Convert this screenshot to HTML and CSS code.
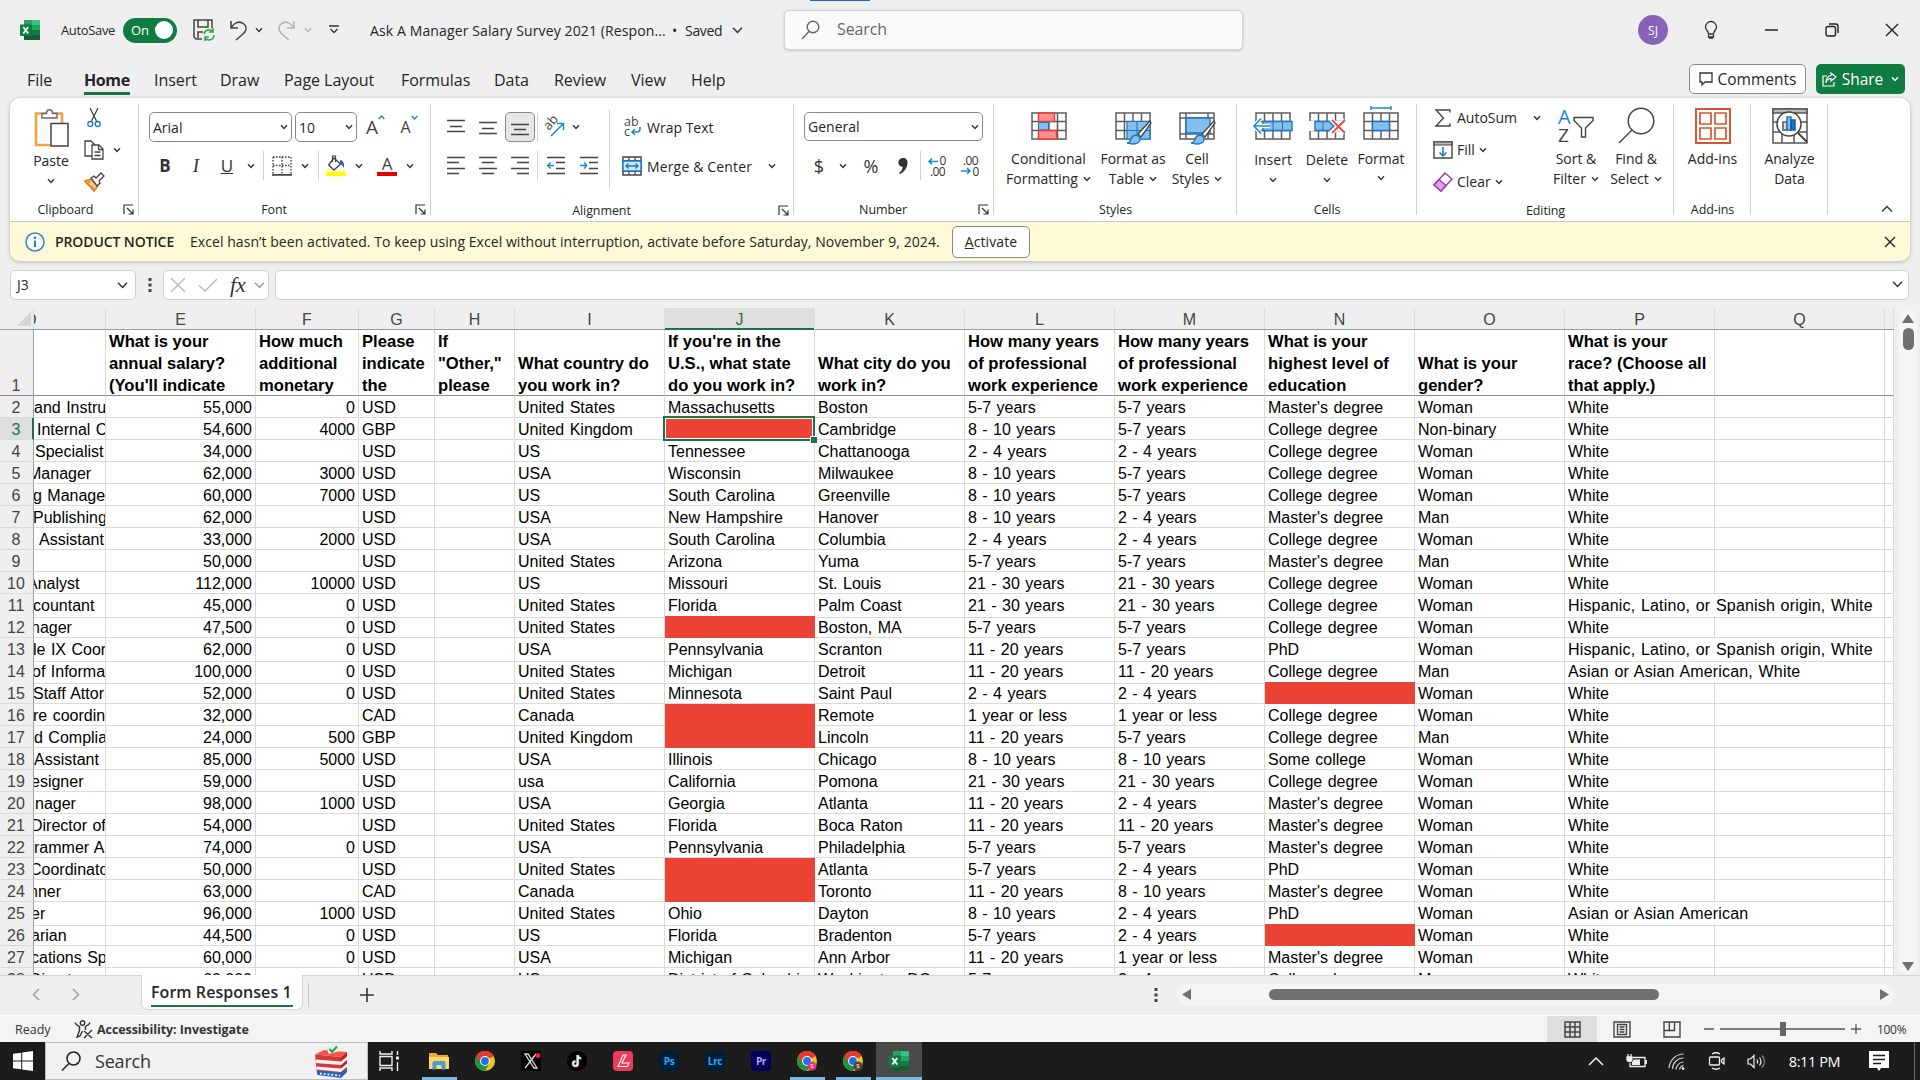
FILE: index.html
```html
<!DOCTYPE html>
<html lang="en">
<head>
<meta charset="utf-8">
<title>Ask A Manager Salary Survey 2021 - Excel</title>
<link rel="stylesheet" href="styles.css">
</head>
<body>
<svg class="defs" width="0" height="0">
  <defs>
    <symbol id="chev" viewBox="0 0 8 6"><path d="M1 1.2 4 4.4 7 1.2" fill="none" stroke="currentColor" stroke-width="1.4" vector-effect="non-scaling-stroke"/></symbol>
    <symbol id="launch" viewBox="0 0 11 11"><path d="M1 10V1h9M4 4l6 6M10 5.5V10H5.5" fill="none" stroke="#333" stroke-width="1.2"/></symbol>
    <symbol id="xl" viewBox="0 0 20 20"><path d="M6 0h13a1 1 0 0 1 1 1v18a1 1 0 0 1-1 1H5a1 1 0 0 1-1-1V1a1 1 0 0 1 1-1z" fill="#21a366"/><path d="M12 0h7a1 1 0 0 1 1 1v4h-8z" fill="#33c481"/><path d="M4 5h8v5H4z" fill="#107c41"/><path d="M4 10h8v5H4zM12 15h8v4a1 1 0 0 1-1 1H5a1 1 0 0 1-1-1v-4z" fill="#185c37"/><path d="M12 10h8v5h-8z" fill="#107c41"/><rect y="4.500" width="11.500" height="11.500" rx="1" fill="#107c41"/><path d="M3.300 7 8.200 13.500M8.200 7 3.300 13.500" stroke="#fff" stroke-width="1.800"/></symbol>
    <symbol id="chrome" viewBox="0 0 20 20"><circle cx="10" cy="10" r="10" fill="#fbc116"/><path d="M10 10 1.340 5A10 10 0 0 1 18.660 5z" fill="#e33b2e"/><path d="M1.340 5A10 10 0 0 0 10 20l4.300-7.500L10 10z" fill="#229342"/><path d="M10 5h8.660A10 10 0 0 0 1.340 5l4.300 7.500z" fill="#e33b2e"/><circle cx="10" cy="10" r="4.900" fill="#fff"/><circle cx="10" cy="10" r="3.900" fill="#1a73e8"/></symbol>
    <symbol id="grid" viewBox="0 0 36 28"><path d="M1 1h34v26H1zM1 9.500h34M1 18.500h34M9.500 1v26M18 1v26M26.500 1v26" fill="#fff" stroke="#5c5c5c" stroke-width="1.500"/></symbol>
    <symbol id="brush" viewBox="0 0 26 26"><path d="M25 2 13 15l3 3L26 4z" fill="#fff" stroke="#444" stroke-width="1.300"/><path d="M2 24c4 0 3-3 5-6s7-2 8 1-2 6-6 6-5-1-7-1z" fill="#83beec" stroke="#1976c2" stroke-width="1.400"/></symbol>
  </defs>
</svg>

<header class="titlebar">
  <svg class="i20" ><use href="#xl"/></svg>
  <span class="t-auto">AutoSave</span>
  <span class="toggle"><b>On</b><i></i></span>
  <svg width="22" height="22" viewBox="0 0 22 22" fill="none" stroke="#444" stroke-width="1.500"><path d="M9 20H3L1 18V1h18v8M5 1v7h10V1M5 19v-6h5"/><path d="M11 15a5 5 0 0 1 9-2M20 9v4h-4M21 16a5 5 0 0 1-9 3M12 22v-4h4" stroke="#2fa04e"/></svg>
  <svg width="20" height="21" viewBox="0 0 20 21" fill="none" stroke="#444" stroke-width="1.600"><path d="M2 1v7h7M2 8c3-5 8-8 13-4 4 4 2 7-1 10l-7 6"/></svg>
  <svg class="chev"><use href="#chev"/></svg>
  <svg width="20" height="21" viewBox="0 0 20 21" fill="none" stroke="#b5b5b5" stroke-width="1.600"><path d="M18 1v7h-7M18 8C15 3 10 0 5 4 1 8 3 11 6 14l7 6"/></svg>
  <svg class="chev pale"><use href="#chev"/></svg>
  <svg width="10" height="10" viewBox="0 0 10 10" fill="none" stroke="#333" stroke-width="1.300"><path d="M0 1h10M1.500 4 5 7.500 8.500 4"/></svg>
  <span class="t-doc t-name">Ask A Manager Salary Survey 2021 (Respon...</span>
  <span class="t-doc">•</span>
  <span class="t-doc">Saved</span>
  <svg class="chev12"><use href="#chev"/></svg>
  <div class="searchbox">
    <svg width="20" height="20" viewBox="0 0 20 20" fill="none" stroke="#666" stroke-width="1.400"><circle cx="12" cy="7" r="5.800"/><path d="M8 11.500 1 19"/></svg>
    <span>Search</span>
    <i class="busy"></i>
  </div>
  <span class="avatar">SJ</span>
  <svg width="14" height="18" viewBox="0 0 14 18" fill="none" stroke="#333" stroke-width="1.300"><path d="M4.500 13c0-3-3-4-3-7a5.500 5.500 0 0 1 11 0c0 3-3 4-3 7zM5 17h4M4.500 14v2h5v-2"/></svg>
  <svg width="13" height="12" viewBox="0 0 13 12" stroke="#222" stroke-width="1.500"><path d="M0 6h13"/></svg>
  <svg width="14" height="14" viewBox="0 0 14 14" fill="none" stroke="#222" stroke-width="1.400"><rect x="1" y="3.500" width="9.500" height="9.500" rx="2"/><path d="M4 1h6.500Q13 1 13 3.500V10"/></svg>
  <svg width="14" height="14" viewBox="0 0 14 14" stroke="#222" stroke-width="1.400"><path d="M1 1l12 12M13 1 1 13"/></svg>
</header>

<nav class="tabs">
  <span>File</span><span class="on">Home</span><span>Insert</span><span>Draw</span><span>Page Layout</span><span>Formulas</span><span>Data</span><span>Review</span><span>View</span><span>Help</span>
  <button class="btn-comments"><svg width="14" height="14" viewBox="0 0 14 14" fill="none" stroke="#333" stroke-width="1.300"><path d="M1 1h12v9H6l-3 3v-3H1z"/></svg>Comments</button>
  <button class="btn-share"><svg width="15" height="15" viewBox="0 0 15 15" fill="none" stroke="#fff" stroke-width="1.200"><path d="M5 4H1v10h11v-4M9 1l5 4-5 4V6.500C6 6.500 4.500 8 4 11c0-5 2-7 5-7.500z"/></svg>Share<svg class="chev"><use href="#chev"/></svg></button>
</nav>

<section class="shell">
<div class="ribbon">
  <div class="group g-clip">
    <div class="body">
      <div class="big paste">
        <svg width="35" height="38" viewBox="0 0 35 38"><path d="M2 4.500h26V36H2z" fill="#fff" stroke="#f0a33f" stroke-width="2.600"/><path d="M6 8h18v24H6z" fill="#fafafa"/><path d="M8 9V4.500h4.500c0-5 6-5 6 0H23V9z" fill="#fff" stroke="#666" stroke-width="1.400"/><path d="M17 14.500h17V37H17z" fill="#fff" stroke="#444" stroke-width="1.500"/></svg>
        <span>Paste</span><svg class="chev"><use href="#chev"/></svg>
      </div>
      <div class="clipcol">
        <svg width="14" height="20" viewBox="0 0 14 20" fill="none" stroke="#444" stroke-width="1.300"><path d="M3 0l6.500 13M11 0 4.500 13"/><circle cx="3.300" cy="16" r="2.500" stroke="#1976c2"/><circle cx="10.700" cy="16" r="2.500" stroke="#1976c2"/></svg>
        <div class="copyrow"><svg width="20" height="20" viewBox="0 0 20 20" fill="#fff" stroke="#444" stroke-width="1.300"><path d="M8 16H1V1h6l3 3v12z"/><path d="M8 5h7l4 4v10H8z"/><path d="M14.500 5v4.500H19M10.500 12h6M10.500 15.500h6" fill="none"/></svg><svg class="chev"><use href="#chev"/></svg></div>
        <svg width="21" height="20" viewBox="0 0 21 20"><path d="M1 9l6-2 7 7-4 5z" fill="#fbc586" stroke="#e07b1a" stroke-width="1.500"/><path d="M3 12l7 5M6 9l-3 3" stroke="#e07b1a" stroke-width="1.300"/><path d="M7 6l3-2 2 2 5-5 3 3-5 5 1 2-3 3z" fill="#fff" stroke="#444" stroke-width="1.300"/></svg>
      </div>
    </div>
    <footer><span>Clipboard</span><svg class="launch"><use href="#launch"/></svg></footer>
  </div>

  <div class="group g-font">
    <div class="rows">
      <div class="r r1">
        <div class="combo"><span>Arial</span><svg class="chev"><use href="#chev"/></svg></div>
        <div class="combo"><span>10</span><svg class="chev"><use href="#chev"/></svg></div>
        <span class="afont">A<svg width="7" height="5" viewBox="0 0 7 5"><path d="M.7 4 3.500 1 6.300 4" fill="none" stroke="#1e88d8" stroke-width="1.500"/></svg></span>
        <span class="afont small">A<svg width="7" height="5" viewBox="0 0 7 5"><path d="M.7 1 3.500 4 6.300 1" fill="none" stroke="#1e88d8" stroke-width="1.500"/></svg></span>
      </div>
      <div class="r r2">
        <b class="ltr">B</b><i class="ltr it">I</i><u class="ltr">U</u><svg class="chev"><use href="#chev"/></svg><hr>
        <svg width="20" height="20" viewBox="0 0 20 20" fill="none" stroke="#444" stroke-width="1.400"><path d="M1 1h18M1 1v17M19 1v17M10 1v17M1 9.500h18" stroke-dasharray="1.600 1.400"/><path d="M0 18.800h20" stroke-width="1.800"/></svg>
        <svg class="chev"><use href="#chev"/></svg><hr>
        <svg width="20" height="20" viewBox="0 0 20 20"><path d="M8 2 2.500 9l5.500 5 6.500-6z" fill="#fff" stroke="#444" stroke-width="1.300"/><path d="M6.500 6V0h3v6" fill="none" stroke="#444" stroke-width="1.200"/><path d="M14 4c3 0 4.500 3 4 8-1-2-2-3-4-4z" fill="#1e66b0"/><path d="M0 15.500h20V20H0z" fill="#ff0"/></svg>
        <svg class="chev"><use href="#chev"/></svg>
        <span class="fontcolor">A</span>
        <svg class="chev"><use href="#chev"/></svg>
      </div>
    </div>
    <footer><span>Font</span><svg class="launch"><use href="#launch"/></svg></footer>
  </div>

  <div class="group g-align">
    <div class="alignbody">
      <div class="rows">
        <div class="r r1">
          <svg class="al"><path d="M0 2.500h18M3 8.500h12M0 13.500h18"/></svg>
          <svg class="al"><path d="M0 4.500h18M3 10.500h12M0 15.500h18"/></svg>
          <span class="sel"><svg class="al"><path d="M0 6.500h18M3 11.500h12M0 16.500h18"/></svg></span><hr>
          <svg width="21" height="20" viewBox="0 0 21 20"><text x="0" y="0" transform="translate(5 14) rotate(-50)" font-size="13" fill="#444" font-family="Open Sans, sans-serif">ab</text><path d="M7 19 19 7M13 6.500h6.500V13" fill="none" stroke="#1e88d8" stroke-width="1.500"/></svg>
          <svg class="chev"><use href="#chev"/></svg>
        </div>
        <div class="r r2">
          <svg class="al"><path d="M0 1.500h18M0 6.500h12M0 12.500h18M0 17.500h12"/></svg>
          <svg class="al"><path d="M0 1.500h18M3 6.500h12M0 12.500h18M3 17.500h12"/></svg>
          <svg class="al"><path d="M0 1.500h18M6 6.500h12M0 12.500h18M6 17.500h12"/></svg><hr>
          <svg class="al"><path d="M0 1.500h18M9 6.500h9M9 12.500h9M0 17.500h18"/><path d="M7 9.500H1M3.500 6.500.7 9.500l2.800 3" stroke="#1e88d8"/></svg>
          <svg class="al"><path d="M0 1.500h18M9 6.500h9M9 12.500h9M0 17.500h18"/><path d="M0 9.500h6.500M4 6.500l2.800 3-2.800 3" stroke="#1e88d8"/></svg>
        </div>
      </div>
      <div class="rows wraps">
        <div class="w"><svg width="20" height="20" viewBox="0 0 20 20"><text x="2" y="9" font-size="12.5" fill="#444" font-family="Open Sans, sans-serif">ab</text><text x="2" y="19" font-size="12.5" fill="#444" font-family="Open Sans, sans-serif">c</text><path d="M18 10v2q0 3-3 3H10M13 12l-3 3 3 3" fill="none" stroke="#1e88d8" stroke-width="1.500"/></svg><span>Wrap Text</span></div>
        <div class="w"><svg width="20" height="20" viewBox="0 0 20 20"><path d="M1 1h18v18H1z" fill="#fff" stroke="#444" stroke-width="1.500"/><path d="M1 5h18M1 15h18M7 1v4M13 1v4M7 15v4M13 15v4" stroke="#444" stroke-width="1.300"/><path d="M1 5h18v10H1z" fill="#cfe6f8" stroke="#1976c2" stroke-width="1.300"/><path d="M4 10h12M6.500 7.500 4 10l2.500 2.500M13.500 7.500 16 10l-2.500 2.500" fill="none" stroke="#1976c2" stroke-width="1.300"/></svg><span class="merge">Merge &amp; Center</span><svg class="chev"><use href="#chev"/></svg></div>
      </div>
    </div>
    <footer><span>Alignment</span><svg class="launch"><use href="#launch"/></svg></footer>
  </div>

  <div class="group g-num">
    <div class="rows">
      <div class="combo"><span>General</span><svg class="chev"><use href="#chev"/></svg></div>
      <div class="r r2">
        <span class="sym">$</span><svg class="chev"><use href="#chev"/></svg><span class="sym">%</span><svg width="10" height="16" viewBox="0 0 10 16"><path d="M5 0a4 4 0 0 1 4.500 4.500C9.500 10 6 14 2 16l-1-1c2-1.500 3.500-3.500 3.700-6A4.400 4.400 0 1 1 5 0z" fill="#333"/></svg><hr>
        <svg width="21" height="20" viewBox="0 0 21 20" class="dec"><text x="12.500" y="9">0</text><text x="3" y="19.500">.00</text><path d="M11 5.500H2M5 2.500l-3 3 3 3"/></svg>
        <svg width="21" height="20" viewBox="0 0 21 20" class="dec"><text x="3" y="9">.00</text><text x="12.500" y="19.500">0</text><path d="M1 15h9M7 12l3 3-3 3"/></svg>
      </div>
    </div>
    <footer><span>Number</span><svg class="launch"><use href="#launch"/></svg></footer>
  </div>

  <div class="group g-styles">
    <div class="body">
      <div class="big"><svg width="36" height="36" viewBox="0 0 36 36"><g transform="translate(0 4)"><use href="#grid" width="36" height="28"/><path d="M7.500 1h16v8.500h-16z" fill="#ff8f8f" stroke="#e23b3b" stroke-width="1.400"/><path d="M7.500 10.500h10v7.500h-10z" fill="#83beec" stroke="#1976c2"/><path d="M7.500 18.500h18V27h-18z" fill="#ff8f8f" stroke="#e23b3b" stroke-width="1.400"/></g></svg><span>Conditional</span><span>Formatting <svg class="chev"><use href="#chev"/></svg></span></div>
      <div class="big"><svg width="40" height="36" viewBox="0 0 40 36"><g transform="translate(2 4)"><use href="#grid" width="36" height="28"/><path d="M12 9.500h23V27H12z" fill="#83beec" stroke="#1976c2" stroke-width="1.200"/><path d="M12 18.500h23M22 9.500V27" stroke="#1976c2"/></g><use href="#brush" x="11" y="11" width="28" height="26"/></svg><span>Format as</span><span>Table <svg class="chev"><use href="#chev"/></svg></span></div>
      <div class="big"><svg width="40" height="36" viewBox="0 0 40 36"><path d="M3 5h34v26H3zM3 10h34M9 5v26M3 26h34M31 5v26" fill="#fff" stroke="#5c5c5c" stroke-width="1.500"/><path d="M9 10h24v15H9z" fill="#83beec" stroke="#1976c2" stroke-width="1.400"/><use href="#brush" x="11" y="11" width="28" height="26"/></svg><span>Cell</span><span>Styles <svg class="chev"><use href="#chev"/></svg></span></div>
    </div>
    <footer><span>Styles</span></footer>
  </div>

  <div class="group g-cells">
    <div class="body">
      <div class="big"><svg width="40" height="36" viewBox="0 0 40 36"><g transform="translate(2 4)"><use href="#grid" width="36" height="28"/></g><path d="M10 13.500h29v9H10z" fill="#83beec" stroke="#1976c2" stroke-width="1.400"/><path d="M20 13.500v9M29.500 13.500v9" stroke="#1976c2"/><path d="M17 18H1M8 10.500 1 18l7 7.500" fill="none" stroke="#fff" stroke-width="4"/><path d="M17 18H1M8 10.500 1 18l7 7.500" fill="none" stroke="#1e88d8" stroke-width="1.600"/></svg><span class="dn">Insert</span><svg class="chev"><use href="#chev"/></svg></div>
      <div class="big"><svg width="40" height="36" viewBox="0 0 40 36"><g transform="translate(2 4)"><use href="#grid" width="36" height="28"/></g><path d="M1 13h38v10H1z" fill="#fff"/><path d="M8 13.500h14l5 4.500-5 4.500H8z" fill="#83beec" stroke="#1976c2" stroke-width="1.400"/><path d="M16 13.500v9" stroke="#1976c2"/><path d="M25 12l13 13M38 12 25 25" stroke="#fff" stroke-width="4"/><path d="M25 12l13 13M38 12 25 25" stroke="#f04848" stroke-width="1.800"/></svg><span class="dn">Delete</span><svg class="chev"><use href="#chev"/></svg></div>
      <div class="big"><svg width="36" height="36" viewBox="0 0 36 36"><g transform="translate(0 4)"><use href="#grid" width="36" height="28"/></g><path d="M9.500 13.500h17v9h-17z" fill="#83beec" stroke="#1976c2" stroke-width="1.400"/><path d="M8 0h20M8-2v4M28-2v4" stroke="#1e88d8" stroke-width="1.500"/></svg><span>Format</span><svg class="chev up"><use href="#chev"/></svg></div>
    </div>
    <footer><span>Cells</span></footer>
  </div>

  <div class="group g-edit">
    <div class="body">
      <div class="editcol">
        <div><svg width="20" height="18" viewBox="0 0 20 18"><path d="M17 3.500V1H3l7.500 8L3 17h14v-2.500" fill="none" stroke="#444" stroke-width="1.400"/></svg><span>AutoSum</span><svg class="chev far"><use href="#chev"/></svg></div>
        <div><svg width="20" height="18" viewBox="0 0 20 18"><path d="M1 1h18v16H1z" fill="#fff" stroke="#444" stroke-width="1.400"/><path d="M1 1h18v3H1z" fill="#bbb" stroke="#444" stroke-width="1.200"/><path d="M10 6v9M6.500 11.500 10 15l3.500-3.500" fill="none" stroke="#1976c2" stroke-width="1.500"/></svg><span>Fill</span><svg class="chev"><use href="#chev"/></svg></div>
        <div><svg width="20" height="20" viewBox="0 0 20 20" stroke="#a238a8" stroke-width="1.400"><path d="M12 1l7 6L8 19l-7-6z" fill="#fff"/><path d="M6 7.500l7 6L8 19l-7-6z" fill="#dca3e4"/></svg><span>Clear</span><svg class="chev"><use href="#chev"/></svg></div>
      </div>
      <div class="big"><svg width="36" height="36" viewBox="0 0 36 36"><text x="0" y="16" font-size="20" fill="#1e88d8" font-family="Open Sans, sans-serif">A</text><text x="0" y="34" font-size="19" fill="#444" font-family="Open Sans, sans-serif">Z</text><path d="M16 9.500h19v3l-7.500 7.500v9h-4v-9L16 12.500z" fill="#fff" stroke="#444" stroke-width="1.400"/></svg><span>Sort &amp;</span><span>Filter <svg class="chev"><use href="#chev"/></svg></span></div>
      <div class="big"><svg width="38" height="36" viewBox="0 1 38 36" fill="none" stroke="#444" stroke-width="1.500"><circle cx="24" cy="14" r="12.800"/><path d="M15 23 2 36"/></svg><span>Find &amp;</span><span>Select <svg class="chev"><use href="#chev"/></svg></span></div>
    </div>
    <footer><span>Editing</span></footer>
  </div>

  <div class="group g-add">
    <div class="body">
      <div class="big"><svg width="36" height="36" viewBox="0 0 36 36" fill="#fff" stroke="#d8552f" stroke-width="2"><path d="M1 1h34v34H1z" /><path d="M5 5h11v11H5zM20 5h11v11H20zM5 20h11v11H5zM20 20h11v11H20z" stroke-width="1.700"/></svg><span>Add-ins</span></div>
    </div>
    <footer><span>Add-ins</span></footer>
  </div>

  <div class="group g-ana">
    <div class="body">
      <div class="big"><svg width="36" height="36" viewBox="0 0 36 36" fill="none" stroke="#555" stroke-width="1.500"><path d="M1 1h34v34H1z" fill="#fff"/><path d="M1 1h34v4H1z" fill="#bbb"/><path d="M1 14h34M1 24h34M10 24v11M22 24v11"/><circle cx="17" cy="16" r="12" fill="#fff" stroke="#444"/><path d="M26 25l9 9" stroke="#444" stroke-width="2"/><path d="M11 14h4v8h-4z" fill="#ddd"/><path d="M15 9h4v13h-4z" fill="#83beec" stroke="#1976c2"/><path d="M19 12h4v10h-4z" fill="#1976c2" stroke="#185a9c"/></svg><span>Analyze</span><span>Data</span></div>
    </div>
    <footer></footer>
  </div>
  <div class="collapse"><svg width="12" height="8" viewBox="0 0 12 8"><path d="M1 6.500 6 1.500l5 5" fill="none" stroke="#333" stroke-width="1.400"/></svg></div>
</div>
<div class="notice">
  <svg width="20" height="20" viewBox="0 0 20 20"><circle cx="10" cy="10" r="9" fill="#fff" stroke="#2f8bc9" stroke-width="1.600"/><circle cx="10" cy="5.800" r="1.200" fill="#1976c2"/><path d="M10 8.500V15" stroke="#1976c2" stroke-width="1.900"/></svg>
  <span class="n-title">PRODUCT NOTICE</span>
  <span class="n-text">Excel hasn’t been activated. To keep using Excel without interruption, activate before Saturday, November 9, 2024.</span>
  <button><u>A</u>ctivate</button>
  <svg class="n-x" width="12" height="12" viewBox="0 0 12 12" stroke="#222" stroke-width="1.400"><path d="M1 1l10 10M11 1 1 11"/></svg>
</div>
</section>

<div class="formula">
  <div class="namebox"><span>J3</span><svg class="chev12"><use href="#chev"/></svg></div>
  <svg width="4" height="14" viewBox="0 0 4 14" fill="#444"><path d="M.5 0h3v3h-3zM.5 5.500h3v3h-3zM.5 11h3v3h-3z"/></svg>
  <div class="fx"><svg width="16" height="16" viewBox="0 0 16 16" stroke="#b9b9b9" stroke-width="1.400"><path d="M1 1l14 14M15 1 1 15"/></svg><svg width="20" height="14" viewBox="0 0 20 14" fill="none" stroke="#b9b9b9" stroke-width="1.400"><path d="M1 7.500 7 13 19 1"/></svg><i>fx</i><svg class="chev12 gray"><use href="#chev"/></svg></div>
  <div class="finput"><svg class="chev12"><use href="#chev"/></svg></div>
</div>

<main class="sheetwrap">
  <div class="sheet" id="sheet"></div>
  <div class="vscroll"><svg width="12" height="10" viewBox="0 0 12 10"><path d="M6 0l6 9H0z" fill="#707070"/></svg><i></i><svg width="12" height="10" viewBox="0 0 12 10"><path d="M6 10 0 1h12z" fill="#707070"/></svg></div>
</main>

<div class="sheetbar">
  <svg width="8" height="13" viewBox="0 0 8 13"><path d="M7 1 1.500 6.500 7 12" fill="none" stroke="#a0a0a0" stroke-width="1.500"/></svg>
  <svg width="8" height="13" viewBox="0 0 8 13"><path d="M1 1l5.500 5.500L1 12" fill="none" stroke="#a0a0a0" stroke-width="1.500"/></svg>
  <div class="stab"><span>Form Responses 1</span></div>
  <i class="stsep"></i>
  <svg width="14" height="14" viewBox="0 0 14 14" stroke="#333" stroke-width="1.600"><path d="M7 0v14M0 7h14"/></svg>
  <svg width="4" height="14" viewBox="0 0 4 14" fill="#444"><path d="M.5 0h3v3h-3zM.5 5.500h3v3h-3zM.5 11h3v3h-3z"/></svg>
  <div class="hscroll"><svg width="9" height="11" viewBox="0 0 9 11"><path d="M0 5.500 9 0v11z" fill="#707070"/></svg><i></i><svg width="9" height="11" viewBox="0 0 9 11"><path d="M9 5.500 0 0v11z" fill="#707070"/></svg></div>
</div>

<div class="status">
  <span>Ready</span>
  <svg width="19" height="18" viewBox="0 0 19 18" fill="none" stroke="#333" stroke-width="1.400"><circle cx="8.500" cy="3" r="2.200"/><path d="M1 2.500c1 3 3 3.500 4.500 4v4L3 17l3-1 2.500-5M16 2.500c-1 3-3 3.500-4.500 4V10M10 11l8 7M18 10l-8 8"/></svg>
  <b>Accessibility: Investigate</b>
  <div class="view on"><svg width="17" height="17" viewBox="0 0 17 17"><path d="M1 1h15v15H1zM1 6h15M1 11h15M6 1v15M11 1v15" fill="none" stroke="#444" stroke-width="1.500"/></svg></div>
  <div class="view"><svg width="18" height="17" viewBox="0 0 18 17"><path d="M1 1h16v15H1zM4.500 3.500h9v10h-9zM6.500 6h5M6.500 8.500h5M6.500 11h5" fill="none" stroke="#444" stroke-width="1.400"/></svg></div>
  <div class="view"><svg width="18" height="17" viewBox="0 0 18 17"><path d="M1 1h16v15H1zM1 9.500h10.500V1M6.300 1v8.500" fill="none" stroke="#444" stroke-width="1.400"/></svg></div>
  <div class="zoomer"><svg width="157" height="16" viewBox="0 0 157 16" stroke="#555" stroke-width="1.300"><path d="M0 8h10M16 8h125M147 8h10M152 3v10"/><path d="M76 1h6v14h-6z" fill="#666" stroke="none"/></svg></div>
  <span class="pct">100%</span>
</div>

<footer class="taskbar">
  <div class="start"><svg width="20" height="20" viewBox="0 0 20 20" fill="#fff"><path d="M0 2.800 8.200 1.700v7.800H0zM9.200 1.500 20 0v9.500H9.200zM0 10.500h8.200v7.800L0 17.200zM9.200 10.500H20V20L9.200 18.500z"/></svg></div>
  <div class="tsearch"><svg width="20" height="20" viewBox="0 0 20 20" fill="none" stroke="#222" stroke-width="1.500"><circle cx="12.500" cy="7.500" r="6.500"/><path d="M8 12.500 1 19.500"/></svg><span>Search</span>
    <svg width="34" height="34" viewBox="0 0 34 34"><path d="M1 10.500 27 13v20L3 30z" fill="#d93636"/><path d="M27 13l6-5v19l-6 6z" fill="#b32626"/><path d="M1 10.500 10 6l23 2-6 5z" fill="#f0574a"/><path d="M12 3l10-3 4 7-11 3z" fill="#e3edf0"/><path d="M15.500 5l2.500 3 5-5.500" fill="none" stroke="#2f9e44" stroke-width="2"/><path d="M2 15.500l25 2 6-5v3.500l-6 5-25-2zM2.500 22.500l24.500 2 6-5V23l-6 5-24.500-2.500z" fill="#f4f4f4"/><path d="M3 26.500l24 2.500 6-5v4l-6 6-23.500-3z" fill="#2368c4"/><path d="M6 29.500l20 2.200" stroke="#fff" stroke-width="1.800" stroke-dasharray="1.800 2"/></svg></div>
  <div class="app"><svg width="22" height="20" viewBox="0 0 22 20" fill="none" stroke="#eee" stroke-width="1.400"><path d="M1 0v3h12V0M1 20v-3h12v3M1 5.500h12v9H1zM18.500 0v4M18.500 11v9"/><path d="M17 5.500h3v3h-3z" fill="#eee" stroke="none"/></svg></div>
  <div class="app run"><svg width="20" height="18" viewBox="0 0 20 18"><path d="M0 1h7l2 2h10v14H0z" fill="#e8a92c"/><path d="M0 5h20v12H0z" fill="#ffd768"/><path d="M3.500 17.500V11q0-2 2-2h9q2 0 2 2v6.500h-4V13h-5v4.500z" fill="#4a9bd4"/></svg></div>
  <div class="app"><svg class="i20"><use href="#chrome"/></svg></div>
  <div class="app"><svg width="20" height="20" viewBox="0 0 20 20"><rect width="20" height="20" fill="#000"/><path d="M4 3h3l9 14h-3zM15 3 4 17" fill="none" stroke="#ddd" stroke-width="1.300"/><circle cx="17" cy="4.500" r="2.500" fill="#f0193c"/></svg></div>
  <div class="app"><svg width="20" height="20" viewBox="0 0 20 20"><circle cx="10" cy="10" r="10" fill="#000"/><path d="M10.200 4v8.500a2.200 2.200 0 1 1-2.200-2.200" fill="none" stroke="#25f4ee" stroke-width="2"/><path d="M11.200 4.500v8.500a2.400 2.400 0 1 1-2.400-2.400M11.200 4.500q.5 3 3.300 3.300" fill="none" stroke="#fe2c55" stroke-width="2"/><path d="M10.800 4.200v8.500a2.300 2.300 0 1 1-2.300-2.300M10.800 4.200q.5 3 3.200 3.200" fill="none" stroke="#fff" stroke-width="1.600"/></svg></div>
  <div class="app"><svg width="20" height="20" viewBox="0 0 20 20"><rect width="20" height="20" rx="4" fill="#ef3a5d"/><path d="M10 4h3L9 12h7l-1.500 3.500H5z" fill="none" stroke="#fff" stroke-width="1.100"/></svg></div>
  <div class="app"><span class="adobe ps">Ps</span></div>
  <div class="app"><span class="adobe ps">Lrc</span></div>
  <div class="app"><span class="adobe pr">Pr</span></div>
  <div class="app run"><svg width="20" height="20" viewBox="0 0 20 20"><use href="#chrome"/><circle cx="15" cy="15" r="4.600" fill="#e0357f"/><text class="badge" x="15" y="17.200">s</text></svg></div>
  <div class="app run"><svg width="20" height="20" viewBox="0 0 20 20"><use href="#chrome"/><circle cx="15" cy="15" r="4.600" fill="#5d4038"/><text class="badge" x="15" y="17.200">s</text></svg></div>
  <div class="app act"><svg class="i20"><use href="#xl"/></svg></div>
  <div class="tray">
    <svg width="16" height="10" viewBox="0 0 16 10"><path d="M1 9l7-7 7 7" fill="none" stroke="#eee" stroke-width="1.500"/></svg>
    <svg width="21" height="15" viewBox="0 0 21 15" fill="none" stroke="#eee" stroke-width="1.300"><path d="M7 3.500h12v9H4V9M20.300 6v4"/><path d="M8 5.500h6V11H6V8z" fill="#eee" stroke="none"/><path d="M1 3h5v2.500q0 2-2.500 2T1 5.500zM2 0v3M5 0v3" fill="#eee"/></svg>
    <svg width="17" height="17" viewBox="0 0 17 17" fill="none" stroke="#ccc" stroke-width="1.200"><path d="M1 15A15 15 0 0 1 15.500 1M4.500 16A11 11 0 0 1 15.500 5M8 16.500A8 8 0 0 1 15.500 9M11.500 16.500a5 5 0 0 1 4-4"/><circle cx="15" cy="15.500" r="1.300" fill="#fff" stroke="none"/></svg>
    <svg width="16" height="18" viewBox="0 0 16 18" fill="none" stroke="#eee" stroke-width="1.300"><path d="M1.500 5h8q1 0 1 1v6q0 1-1 1h-8q-1 0-1-1V6q0-1 1-1zM12.500 8l2.500-2v6l-2.500-2zM3 2q4-2.500 8 0M3 16q4 2.500 8 0"/></svg>
    <svg width="20" height="17" viewBox="0 0 20 17" fill="none" stroke="#eee" stroke-width="1.200"><path d="M1 6h2.500L7 2.500v12L3.500 11H1zM10 6.500q1.500 2 0 4M12.500 4.500q3 4 0 8"/><path d="M15 2.500q5 6 0 12" stroke="#888"/></svg>
    <span>8:11 PM</span>
    <svg width="20" height="20" viewBox="0 0 20 20"><path d="M0 0h20v17h-8l-2 3-2-3H0z" fill="#fff"/><path d="M4 4.500h12M4 8.500h12M4 12.500h8" stroke="#1c1c1c" stroke-width="1.300"/></svg>
    <i></i>
  </div>
</footer>
<script src="sheet.js"></script>
</body>
</html>
```
FILE: styles.css
```css
* { box-sizing: border-box; }
body {
  margin: 0; width: 1920px; height: 1080px; overflow: hidden;
  display: flex; flex-direction: column;
  background: #efefef; color: #262626;
  font-family: "Open Sans", "Noto Sans", sans-serif; font-size: 14px;
}
svg { display: block; flex: none; overflow: visible; }
.defs { position: absolute; }
.chev { width: 8px; height: 6px; color: #333; }
.chev12 { width: 13px; height: 9px; color: #333; }
.pale { color: #b5b5b5; }
.gray { color: #999; }
.i20 { width: 20px; height: 20px; }
button { font: inherit; color: inherit; margin: 0; padding: 0; }
hr { border: 0; width: 1px; height: 29px; margin: 0; background: #d0d0d0; }

/* title bar */
.titlebar {
  height: 60px; padding-left: 20px; flex: none;
  display: grid; align-items: center;
  grid-template-columns: 41px 62px 70px 36px 26px 21px 28px 25px 41px 302px 13px 46px 53px 854px 66px 61px 60px 60px 20px;
}
.t-auto { font-size: 13px; letter-spacing: -.35px; white-space: nowrap; }
.t-doc { font-size: 14px; letter-spacing: -.3px; white-space: nowrap; }
.t-name { letter-spacing: .12px; }
.toggle {
  width: 54px; height: 25px; border-radius: 13px; background: #107c41; color: #fff;
  display: flex; align-items: center; justify-content: space-between; padding: 0 4px 0 8px;
}
.toggle b { font-weight: 400; font-size: 13px; }
.toggle i { width: 18px; height: 18px; border-radius: 50%; background: #fff; }
.searchbox {
  position: relative; width: 459px; height: 40px; background: #fafafa; border: 1px solid #d3d3d3; border-radius: 5px;
  box-shadow: 0 1px 3px rgba(0,0,0,.18); display: flex; align-items: center; gap: 16px; padding-left: 16px;
  font-size: 16px; color: #666;
}
.searchbox span { padding-bottom: 3px; letter-spacing: -.1px; }
.busy { position: absolute; left: 25px; top: -11px; width: 60px; height: 1px; background: #1a68b0; }
.avatar {
  width: 30px; height: 30px; border-radius: 50%; background: #8764b8; color: #fff;
  font-size: 12px; display: grid; place-items: center;
}

/* tabs */
.tabs {
  height: 38px; flex: none; padding-left: 27px; font-size: 16px; letter-spacing: -.05px;
  display: grid; align-items: start;
  grid-template-columns: 57px 70px 66px 64px 117px 93px 60px 77px 60px 998px 127px 89px;
}
.tabs span { height: 35px; line-height: 41px; white-space: nowrap; justify-self: start; }
.tabs .on { font-weight: 700; letter-spacing: -.4px; border-bottom: 3px solid #1a7340; }
.btn-comments, .btn-share { height: 30px; margin-top: 4px; border-radius: 5px; display: flex; align-items: center; justify-content: center; gap: 5px; font-size: 15.5px; }
.btn-comments { width: 117px; background: #fff; border: 1px solid #8a8a8a; }
.btn-share { background: #107c41; border: 0; color: #fff; }
.btn-share .chev { color: #fff; margin-left: 3px; }

/* ribbon */
.shell { margin: 0 10px; flex: none; width: 1900px; border-radius: 10px; overflow: hidden; box-shadow: 0 1px 4px rgba(0,0,0,.25); }
.ribbon { height: 124px; background: #fff; display: flex; border-bottom: 1px solid #c8c8c8; }
.group { display: flex; flex-direction: column; background: linear-gradient(#d0d0d0, #d0d0d0) right 6px / 1px 111px no-repeat; }
.group footer {
  height: 24px; padding: 0 5px; font-size: 12.5px; letter-spacing: -.1px;
  display: grid; grid-template-columns: 11px 1fr 11px; align-items: center;
}
.group footer span { grid-column: 2; text-align: center; }
.launch { width: 11px; height: 11px; grid-column: 3; }
.body { height: 101px; display: flex; }
.rows { height: 101px; padding-top: 14px; display: flex; flex-direction: column; gap: 10px; }
.r { height: 29px; display: grid; align-items: center; justify-items: center; }
.big { display: flex; flex-direction: column; align-items: center; padding-top: 10px; white-space: nowrap; }
.big > svg:first-child { margin-bottom: 5px; }
.big > span { height: 20px; line-height: 18px; display: flex; align-items: center; gap: 5px; }
.big > .dn { height: 28px; line-height: 22px; align-items: flex-start; }
.big .chev.up { margin-top: 6px; }
.g-clip { width: 129px; }
.g-clip footer span { padding-right: 18px; }
.paste { padding: 11px 0 0 20px; margin-right: 18px; width: 62px; }
.paste > svg:first-child { margin-bottom: 4px; }
.paste > span { margin-bottom: 7px; }
.clipcol { padding-top: 10px; display: flex; flex-direction: column; align-items: flex-start; gap: 12px; margin-left: -6px; }
.clipcol > svg:first-child { margin-left: 3px; }
.copyrow { display: flex; align-items: center; gap: 9px; }

.combo {
  justify-self: stretch; height: 30px; border: 1px solid #8a8a8a; border-radius: 5px; background: #fff;
  display: flex; align-items: center; justify-content: space-between; padding: 0 3px;
}
.g-font { width: 292px; }
.g-font footer span { padding-right: 22px; }
.g-font .r1 { grid-template-columns: 143px 62px 31px 30px; padding-left: 10px; column-gap: 3px; }
.g-font .r2 { grid-template-columns: 32px 30px 32px 16px 8px 30px 16px 10px 26px 20px 36px 10px; padding-left: 10px; }
.afont { display: flex; font-size: 19px; color: #444; line-height: 24px; }
.afont.small { font-size: 16px; }
.ltr { font-size: 17px; color: #333; line-height: 24px; }
.it { font-family: "Liberation Serif", serif; font-size: 19px; }
.fontcolor { font-size: 17px; line-height: 17px; width: 20px; text-align: center; border-bottom: 4px solid #e00000; color: #444; margin-top: -1px; }
.g-align { width: 363px; }
.g-align footer span, .g-num footer span { padding-right: 22px; }
.alignbody { display: flex; height: 101px; }
.g-align .r { grid-template-columns: 32px 32px 32px 3px 33px 33px; padding-left: 9px; }
.g-align .r1 { grid-template-columns: 32px 32px 32px 3px 31px 12px; }
.g-align .rows:first-child { width: 179px; background: linear-gradient(#d0d0d0, #d0d0d0) right 12px / 1px 79px no-repeat; }
.al { width: 18px; height: 19px; fill: none; stroke: #444; stroke-width: 1.4; }
.sel { width: 30px; height: 30px; border: 1px solid #8a8a8a; border-radius: 5px; background: #e6e6e6; display: grid; place-items: center; }
.wraps { padding-left: 12px; }
.w { height: 29px; display: flex; align-items: center; gap: 5px; padding-top: 1px; }
.merge { letter-spacing: .15px; }
.w .chev { margin-left: 11px; }
.g-num { width: 200px; }
.g-num .combo { margin: 0 11px 0 10px; height: 29px; flex: none; }
.g-num .r { grid-template-columns: 34px 14px 42px 22px 12px 22px 44px; padding-left: 8px; }
.sym { font-size: 18px; color: #333; }
.dec text { font-size: 12px; fill: #333; letter-spacing: -.6px; }
.dec path { fill: none; stroke: #1e88d8; stroke-width: 1.5; }
.g-styles { width: 243px; }
.g-styles .big:nth-child(1) { width: 109px; }
.g-styles .big:nth-child(2) { width: 60px; }
.g-styles .big:nth-child(3) { width: 68px; }
.g-cells { width: 180px; }
.g-cells .body { padding-left: 9px; }
.g-cells .big { width: 54px; }
.g-edit { width: 257px; }
.editcol { width: 127px; padding: 9px 0 0 16px; }
.editcol div { height: 32px; display: flex; align-items: center; gap: 4px; padding-bottom: 11px; }
.editcol .far { margin-left: 12px; }
.g-edit .big { width: 56px; }
.g-edit .big:nth-child(2) { width: 64px; }
.g-add { width: 77px; }
.g-ana { width: 77px; }
.g-add .big, .g-ana .big { width: 77px; }
.collapse { flex: 1; padding: 107px 0 0 53px; }

/* notice */
.notice { height: 39px; background: #fef9d6; display: flex; align-items: center; padding: 0 14px 0 15px; }
.n-title { margin-left: 10px; width: 135px; font-weight: 600; letter-spacing: -.1px; white-space: nowrap; }
.n-text { width: 762px; white-space: nowrap; letter-spacing: .06px; }
.notice button { width: 78px; height: 32px; background: #fff; border: 1px solid #8a8a8a; border-radius: 5px; letter-spacing: .1px; }
.n-x { margin-left: auto; }

/* formula bar */
.formula { height: 47px; flex: none; padding: 9px 11px 0 10px; display: flex; align-items: flex-start; }
.formula > svg { margin: 8px 11px 0 12px; }
.namebox, .fx, .finput { height: 30px; background: #fff; border: 1px solid #cfcfcf; border-radius: 5px; display: flex; align-items: center; }
.namebox { width: 126px; justify-content: space-between; padding: 0 6px; }
.namebox span { padding-bottom: 1px; }
.fx { width: 106px; padding-left: 6px; gap: 12px; }
.fx i { font-family: "Liberation Serif", serif; font-size: 22px; color: #333; line-height: 24px; width: 17px; }
.fx .gray { margin-left: -6px; }
.finput { margin-left: 6px; flex: 1; justify-content: flex-end; padding: 0 4px 2px; }

/* sheet */
.sheetwrap { height: 668px; flex: none; display: flex; overflow: hidden; border-bottom: 1px solid #d4d4d4; }
.sheet { width: 1894px; font-family: "Liberation Sans", Arial, sans-serif; font-size: 16px; word-spacing: 1px; color: #000; background: #fff; }
.row, .cols { display: grid; grid-template-columns: 34px 72px 150px 103px 76px 80px 150px 150px 150px 150px 150px 150px 150px 150px 170px 9px; }
.row { height: 22px; line-height: 23px; }
.row > div { border-right: 1px solid #dadada; border-bottom: 1px solid #dadada; padding: 0 2px 0 3px; white-space: nowrap; overflow: hidden; }
.row > .rh { background: #efefef; color: #444; text-align: center; border-right-color: #9f9f9f; padding: 0 1px 0 0; }
.row > .num { text-align: right; padding-right: 3px; }
.row > .spill { overflow: visible; border-right-color: transparent; letter-spacing: .17px; }
.row > .red { background: #ea4335; border-color: #ea4335; }
.row > .d { padding: 0; overflow: hidden; }
.cols { height: 22px; background: #efefef; border-bottom: 1px solid #9a9a9a; color: #444; }
.cols div { height: 21px; text-align: center; line-height: 23px; border-right: 1px solid #dcdcdc; overflow: hidden; }
.cols .cut { text-align: left; text-indent: -9px; }
.cols .corner { background: linear-gradient(135deg, transparent 50%, #d6d6d6 50%) 16px 4px / 15px 14px no-repeat; }
.cols .cur { background: #dedede; color: #1e7145; height: 22px; box-shadow: inset 0 -2px #1e7145; }
.head { height: 66px; font-weight: 700; font-size: 16.6px; line-height: 22px; word-spacing: 0; }
.head > div { display: flex; align-items: flex-end; border-bottom-color: #8c8c8c; }
.head span { margin-bottom: -2px; }
.head > .rh { font-weight: 400; font-size: 16px; justify-content: center; line-height: 19px; }
.row > .rh.cur { background: #dedede; color: #1e7145; border-right: 2px solid #1e7145; padding: 0; }
.row > .picked { position: relative; overflow: visible; }
.picked::before { content: ""; position: absolute; inset: -2px -1px -2px -2px; border: 2px solid #1e7145; box-shadow: inset 0 0 0 1px #fff; }
.picked::after { content: ""; position: absolute; right: -3px; bottom: -4px; width: 6px; height: 6px; background: #1e7145; border: 1px solid #fff; border-right: 0; border-bottom: 0; }
.vscroll { margin-left: 5px; width: 18px; height: 667px; border-radius: 9px; background: #f5f5f5; display: flex; flex-direction: column; align-items: center; padding: 6px 0 4px; }
.vscroll i { width: 11px; height: 22px; border-radius: 6px; background: #707070; margin: 4px 0 auto; }

/* sheet tabs */
.sheetbar { height: 40px; flex: none; display: grid; align-items: center; grid-template-columns: 40px 69px 167px 52px 794px 23px 717px; padding: 0 0 2px 32px; border-bottom: 1px solid #fff; }
.stab { width: 162px; height: 35px; align-self: start; margin-top: -1px; background: #fff; border: 1px solid #d4d4d4; border-top: 0; border-radius: 0 0 6px 6px; padding-left: 9px; }
.stab span { display: block; width: 142px; height: 32px; line-height: 34px; border-bottom: 2px solid #1e7145; font-size: 16px; font-weight: 600; letter-spacing: .05px; white-space: nowrap; }
.stsep { width: 1px; height: 24px; background: #c6c6c6; }
.hscroll { height: 22px; border-radius: 11px; background: #f5f5f5; display: flex; align-items: center; padding: 0 5px; }
.hscroll i { width: 390px; height: 11px; border-radius: 6px; background: #707070; margin: 0 auto 0 78px; }

/* status bar */
.status { height: 26px; flex: none; background: #f4f4f4; display: flex; align-items: center; padding-left: 15px; font-size: 12.5px; color: #333; }
.status > span:first-child { width: 59px; }
.status b { margin-left: 4px; width: 1450px; font-weight: 700; letter-spacing: -.07px; }
.view { width: 50px; height: 26px; display: grid; place-items: center; }
.view.on { background: #dedede; }
.zoomer { margin-left: 7px; width: 173px; }
.pct { letter-spacing: -.3px; font-size: 12px; }

/* taskbar */
.taskbar { height: 38px; flex: none; background: #1c1c1c; display: flex; }
.start { width: 45px; display: grid; place-items: center; }
.tsearch { width: 323px; height: 38px; background: #f1f1f1; border: 1px solid #bdbdbd; display: flex; align-items: center; padding: 0 19px 0 15px; font-size: 18px; letter-spacing: -.2px; color: #333; }
.tsearch span { margin-left: 14px; flex: 1; }
.app { width: 46px; display: grid; place-items: center; }
.app:nth-child(3) { width: 48px; padding-right: 4px; }
.run { background: linear-gradient(#76b9ed, #76b9ed) center bottom / 35px 3px no-repeat; }
.act { background: linear-gradient(#76b9ed, #76b9ed) center bottom / 46px 3px no-repeat #4a4a4a; }
.adobe { width: 20px; height: 20px; border-radius: 4px; display: grid; place-items: center; font-size: 10px; font-weight: 700; letter-spacing: -.3px; }
.ps { background: #001e36; color: #31a8ff; }
.pr { background: #00005b; color: #b3a4ff; }
.badge { font-size: 7px; fill: #fff; text-anchor: middle; }
.tray { margin-left: auto; color: #fff; display: grid; align-items: center; justify-items: center; grid-template-columns: 40px 40px 41px 40px 39px 77px 51px 16px; width: 344px; font-size: 14.5px; letter-spacing: -.4px; white-space: nowrap; }
.tray i { justify-self: end; width: 1px; height: 38px; background: #666; margin-right: 5px; }
```
FILE: sheet.js
```js
const letters = ["", "D", "E", "F", "G", "H", "I", "J", "K", "L", "M", "N", "O", "P", "Q", ""];

const head = ["", "What is your<br>annual salary?<br>(You'll indicate", "How much<br>additional<br>monetary",
  "Please<br>indicate<br>the", "If<br>\"Other,\"<br>please", "What country do<br>you work in?",
  "If you're in the<br>U.S., what state<br>do you work in?", "What city do you<br>work in?",
  "How many years<br>of professional<br>work experience", "How many years<br>of professional<br>work experience",
  "What is your<br>highest level of<br>education", "What is your<br>gender?",
  "What is your<br>race? (Choose all<br>that apply.)", "", ""];

const C = "College degree", M = "Master's degree", W = "White", US = "United States";
const y5 = "5-7 years", y2 = "2 - 4 years", y8 = "8 - 10 years", y11 = "11 - 20 years", y21 = "21 - 30 years", y1 = "1 year or less";
const HL = "Hispanic, Latino, or Spanish origin, White";

const rows = [
  [0, "and Instru", "55,000", "0", "USD", US, "Massachusetts", "Boston", y5, y5, M, "Woman", W],
  [3, "Internal C", "54,600", "4000", "GBP", "United Kingdom", "#", "Cambridge", y8, y5, C, "Non-binary", W],
  [1, "Specialist", "34,000", "", "USD", "US", "Tennessee", "Chattanooga", y2, y2, C, "Woman", W],
  [-6, "Manager", "62,000", "3000", "USD", "USA", "Wisconsin", "Milwaukee", y8, y5, C, "Woman", W],
  [-1, "g Manage", "60,000", "7000", "USD", "US", "South Carolina", "Greenville", y8, y5, C, "Woman", W],
  [-1, "Publishing", "62,000", "", "USD", "USA", "New Hampshire", "Hanover", y8, y2, M, "Man", W],
  [5, "Assistant", "33,000", "2000", "USD", "USA", "South Carolina", "Columbia", y2, y2, C, "Woman", W],
  [0, "", "50,000", "", "USD", US, "Arizona", "Yuma", y5, y5, M, "Man", W],
  [-7, "Analyst", "112,000", "10000", "USD", "US", "Missouri", "St. Louis", y21, y21, C, "Woman", W],
  [-1, "countant", "45,000", "0", "USD", US, "Florida", "Palm Coast", y21, y21, C, "Woman", HL],
  [-3, "nager", "47,500", "0", "USD", US, "#", "Boston, MA", y5, y5, C, "Woman", W],
  [-1, "le IX Coor", "62,000", "0", "USD", "USA", "Pennsylvania", "Scranton", y11, y5, "PhD", "Woman", HL],
  [-2, "of Informat", "100,000", "0", "USD", US, "Michigan", "Detroit", y11, y11, C, "Man", "Asian or Asian American, White"],
  [-1, "Staff Attor", "52,000", "0", "USD", US, "Minnesota", "Saint Paul", y2, y2, "#", "Woman", W],
  [-1, "re coordin", "32,000", "", "CAD", "Canada", "#", "Remote", y1, y1, C, "Woman", W],
  [0, "d Complia", "24,000", "500", "GBP", "United Kingdom", "#", "Lincoln", y11, y5, C, "Man", W],
  [0, "Assistant", "85,000", "5000", "USD", "USA", "Illinois", "Chicago", y8, y8, "Some college", "Woman", W],
  [-3, "esigner", "59,000", "", "USD", "usa", "California", "Pomona", y21, y21, C, "Woman", W],
  [1, "nager", "98,000", "1000", "USD", "USA", "Georgia", "Atlanta", y11, y2, M, "Woman", W],
  [-3, "Director of", "54,000", "", "USD", US, "Florida", "Boca Raton", y11, y11, M, "Woman", W],
  [0, "rammer A", "74,000", "0", "USD", "USA", "Pennsylvania", "Philadelphia", y5, y5, M, "Woman", W],
  [-4, "Coordinato", "50,000", "", "USD", US, "#", "Atlanta", y5, y2, "PhD", "Woman", W],
  [-5, "nner", "63,000", "", "CAD", "Canada", "#", "Toronto", y11, y8, M, "Woman", W],
  [-3, "er", "96,000", "1000", "USD", US, "Ohio", "Dayton", y8, y2, "PhD", "Woman", "Asian or Asian American"],
  [-3, "arian", "44,500", "0", "USD", "US", "Florida", "Bradenton", y5, y2, "#", "Woman", W],
  [-3, "cations Sp", "60,000", "0", "USD", "USA", "Michigan", "Ann Arbor", y11, y1, M, "Woman", W],
  [-4, "Director", "60,000", "", "USD", "US", "District of Columbia", "Washington DC", y5, y2, C, "Man", W]
];

const cell = (text, cls = "") => `<div class="${cls}">${text}</div>`;

let html = '<div class="cols">' + letters.map((l, i) =>
  cell(l, i === 0 ? "corner" : l === "D" ? "cut" : l === "J" ? "cur" : "")).join("") + "</div>";
html += '<div class="row head">' + cell("1", "rh") + head.map(h => cell(`<span>${h}</span>`)).join("") + "</div>";

rows.forEach((r, i) => {
  const n = i + 2;
  const [off, d, e, f, g, ...rest] = r;
  html += '<div class="row">' + cell(n, n === 3 ? "rh cur" : "rh");
  html += `<div class="d" style="text-indent:${off}px">${d}</div>`;
  html += cell(e, "num") + cell(f, "num") + cell(g) + cell("");
  rest.forEach((v, k) => {
    if (v === "#") html += cell("", n === 3 ? "red picked" : "red");
    else html += cell(v, k === 7 && v.length > 10 ? "spill" : "");
  });
  html += cell("") + cell("") + "</div>";
});
document.getElementById("sheet").innerHTML = html;
```
